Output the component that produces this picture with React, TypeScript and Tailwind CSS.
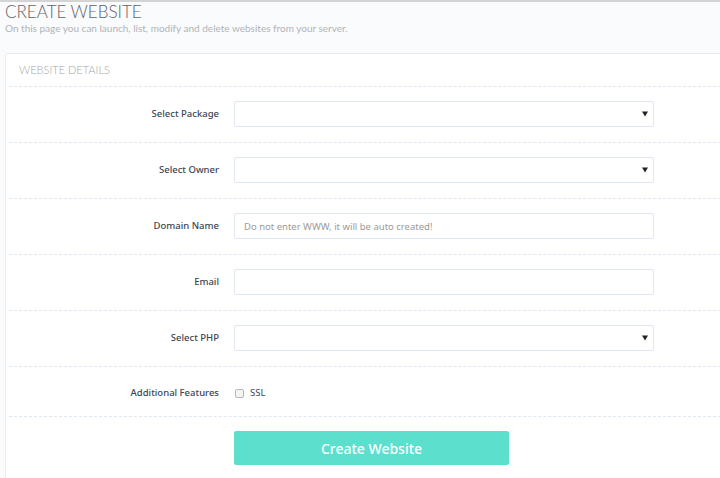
const Field = ({ label, children }: { label: string; children: React.ReactNode }) => (
  <div className="flex items-center pt-[14px] pb-[15px] border-b border-dashed border-[#dde7f0]">
    <label className="w-[225px] pr-[15px] text-right text-[9.5px] font-medium text-[#3d4652]">{label}</label>
    {children}
  </div>
)

const SelectBox = () => (
  <div className="w-[420px] h-[26px] bg-white border border-[#e1e7ee] rounded-[2px] flex items-center justify-end pr-[5px]">
    <svg width="6" height="6" viewBox="0 0 6 6">
      <path d="M0 0.5h6L3 5.5z" fill="#222" />
    </svg>
  </div>
)

const TextBox = ({ placeholder }: { placeholder?: string }) => (
  <input
    className="w-[420px] h-[26px] bg-white border border-[#e1e7ee] rounded-[2px] px-[9px] text-[9.5px] text-[#333] placeholder:text-[#9a9a9a] outline-none"
    placeholder={placeholder}
  />
)

export default function App() {
  return (
    <div
      className="w-[720px] h-[478px] overflow-hidden bg-[#fafbfc] border-t-2 border-[#d4d4d4]"
      style={{ fontFamily: "'Noto Sans', 'Open Sans', sans-serif" }}
    >
      <div className="pl-[5px]">
        <h1
          className="text-[17px] leading-[18px] font-light text-[#636363] mt-[1px]"
          style={{ fontFamily: "Lato, sans-serif" }}
        >
          CREATE WEBSITE
        </h1>
        <p
          className="text-[10px] leading-[12px] text-[#b0b4b8] mt-[1px]"
          style={{ fontFamily: "Lato, sans-serif" }}
        >
          On this page you can launch, list, modify and delete websites from your server.
        </p>
        <div className="mt-[19px] w-[760px] bg-white border border-[#e3ecf3] rounded-[3px] px-[3px]">
          <div
            className="h-[33px] flex items-center pl-[10px] border-b border-dashed border-[#dde7f0] text-[11px] text-[#a5a5a5] font-light"
            style={{ fontFamily: "Lato, sans-serif" }}
          >
            WEBSITE DETAILS
          </div>
          <Field label="Select Package">
            <SelectBox />
          </Field>
          <Field label="Select Owner">
            <SelectBox />
          </Field>
          <Field label="Domain Name">
            <TextBox placeholder="Do not enter WWW, it will be auto created!" />
          </Field>
          <Field label="Email">
            <TextBox />
          </Field>
          <Field label="Select PHP">
            <SelectBox />
          </Field>
          <div className="flex items-center h-[50px] pt-[3px] border-b border-dashed border-[#dde7f0]">
            <label className="w-[225px] pr-[15px] text-right text-[9.5px] font-medium text-[#3d4652]">
              Additional Features
            </label>
            <span className="w-[9px] h-[9px] border border-[#b8b8b8] rounded-[2px] bg-[#f4f4f4] ml-[1px]" />
            <span className="ml-[6px] text-[9.5px] text-[#3d4652]">SSL</span>
          </div>
          <div className="pt-[14px] pb-[20px] pl-[225px]">
            <button className="w-[275px] h-[34px] bg-[#5ce0cd] rounded-[2px] text-white text-[14px] font-medium">
              Create Website
            </button>
          </div>
        </div>
      </div>
    </div>
  )
}
